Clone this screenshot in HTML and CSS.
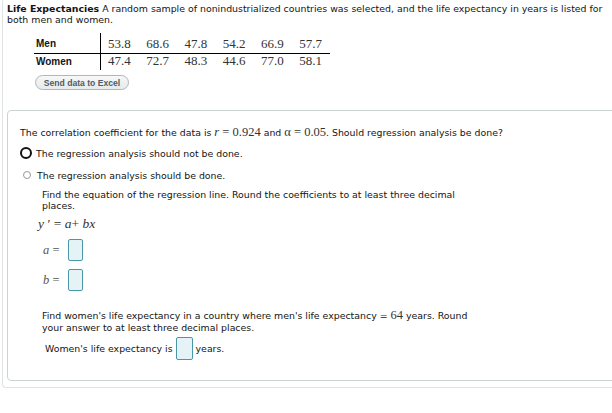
FILE: index.html
```html
<!DOCTYPE html>
<html>
<head>
<meta charset="utf-8">
<link rel="stylesheet" href="styles.css">
</head>
<body>
<div class="outer">
  <p class="intro"><b>Life Expectancies</b> A random sample of nonindustrialized countries was selected, and the life expectancy in years is listed for both men and women.</p>
  <table class="data">
    <tr class="r1">
      <th>Men</th>
      <td>53.8</td><td>68.6</td><td>47.8</td><td>54.2</td><td>66.9</td><td>57.7</td>
    </tr>
    <tr class="r2">
      <th>Women</th>
      <td>47.4</td><td>72.7</td><td>48.3</td><td>44.6</td><td>77.0</td><td>58.1</td>
    </tr>
  </table>
  <button class="excel">Send data to Excel</button>
  <div class="card">
    <p class="q">The correlation coefficient for the data is <span class="m"><i>r</i> = 0.924</span> and <span class="m">α = 0.05</span>. Should regression analysis be done?</p>
    <div class="opt"><span class="radio big"></span><span>The regression analysis should not be done.</span></div>
    <div class="opt small"><span class="radio"></span><span>The regression analysis should be done.</span></div>
    <div class="sub">
      <p class="find">Find the equation of the regression line. Round the coefficients to at least three decimal places.</p>
      <p class="eq"><i>y</i> ′ = <i>a</i>+ <i>bx</i></p>
      <div class="var"><span class="lbl"><i>a</i> =</span><span class="box"></span></div>
      <div class="var"><span class="lbl"><i>b</i> =</span><span class="box"></span></div>
      <p class="find2">Find women's life expectancy in a country where men's life expectancy = <span class="m">64</span> years. Round your answer to at least three decimal places.</p>
      <div class="ans"><span>Women's life expectancy is</span><span class="box"></span><span>years.</span></div>
    </div>
  </div>
</div>
</body>
</html>
```
FILE: styles.css
```css
html, body {
  margin: 0;
  padding: 0;
  overflow: hidden;
  background: #fff;
}
body {
  font-family: "DejaVu Sans", Verdana, sans-serif;
  font-size: 9.4px;
  color: #141414;
}
.outer {
  width: 640px;
  margin-left: 2px;
  margin-top: -6px;
  padding: 9px 0 6px 4px;
  border-left: 1px solid #dfe3e3;
  border-bottom: 1px solid #dfe3e3;
  border-radius: 0 0 0 4px;
}
p { margin: 0; }
.intro {
  line-height: 11px;
  width: 604px;
}
.data {
  border-collapse: collapse;
  margin: 8px 0 0 27px;
}
.data th {
  font-family: "Liberation Sans", Arial, sans-serif;
  font-weight: bold;
  font-size: 10px;
  text-align: left;
  width: 66px;
  padding: 0 0 0 2px;
  border-right: 1px solid #000;
}
.data td {
  font-family: "Liberation Serif", "Times New Roman", serif;
  font-size: 13px;
  color: #333;
  padding: 0 8px 0 7.5px;
  line-height: 14px;
}
.r1 th, .r1 td { height: 20px; padding-top: 2px; box-sizing: border-box; border-bottom: 1px solid #000; }
.r2 th, .r2 td { height: 17px; box-sizing: border-box; padding-bottom: 1px; }
.excel {
  display: block;
  margin: 5px 0 0 28px;
  width: 94px;
  height: 15px;
  padding: 0;
  border: 1px solid #a9b9bf;
  border-radius: 8px;
  background: linear-gradient(#f7f8f8, #e6eaea);
  font-family: "Liberation Sans", Arial, sans-serif;
  font-weight: bold;
  font-size: 8.6px;
  color: #4d5c68;
}
.card {
  box-sizing: border-box;
  margin-top: 20px;
  border: 1px solid #ccd3d3;
  border-radius: 4px;
  height: 271px;
  padding: 16px 0 0 12px;
}
.q { line-height: 12px; }
.m {
  font-family: "Liberation Serif", "Times New Roman", serif;
  font-size: 12.5px;
  color: #333;
  line-height: 10px;
}
.opt {
  display: flex;
  align-items: center;
  gap: 4px;
  margin-top: 8px;
  height: 12px;
}
.opt.small { margin-top: 10px; gap: 6px; padding-left: 3px; }
.radio {
  display: inline-block;
  flex: none;
  width: 8px;
  height: 8px;
  box-sizing: border-box;
  border: 1px solid #9a9a9a;
  border-radius: 50%;
}
.radio.big {
  width: 12px;
  height: 12px;
  border: 2.5px solid #111;
}
.sub {
  padding-left: 22px;
  margin-top: 8px;
}
.find { line-height: 11px; width: 420px; }
.eq {
  margin: 5px 0 0 -4px;
  font-family: "Liberation Serif", "Times New Roman", serif;
  font-size: 13.5px;
  line-height: 16px;
  color: #333;
}
.var {
  display: flex;
  align-items: center;
  margin-top: 7px;
  height: 22px;
}
.var + .var { margin-top: 8px; }
.lbl {
  font-family: "Liberation Serif", "Times New Roman", serif;
  font-size: 12.5px;
  color: #555;
  width: 26px;
  padding-left: 1px;
  box-sizing: border-box;
}
.box {
  display: inline-block;
  flex: none;
  width: 15px;
  height: 22px;
  box-sizing: border-box;
  border: 1px solid #4a97a8;
  border-radius: 2px;
  background: #e5f3f7;
}
.find2 {
  margin-top: 19px;
  line-height: 12px;
  width: 430px;
}
.ans {
  display: flex;
  align-items: center;
  gap: 3px;
  margin-top: 3px;
  padding-left: 3px;
}
.ans .box { height: 23px; width: 17px; }
```
